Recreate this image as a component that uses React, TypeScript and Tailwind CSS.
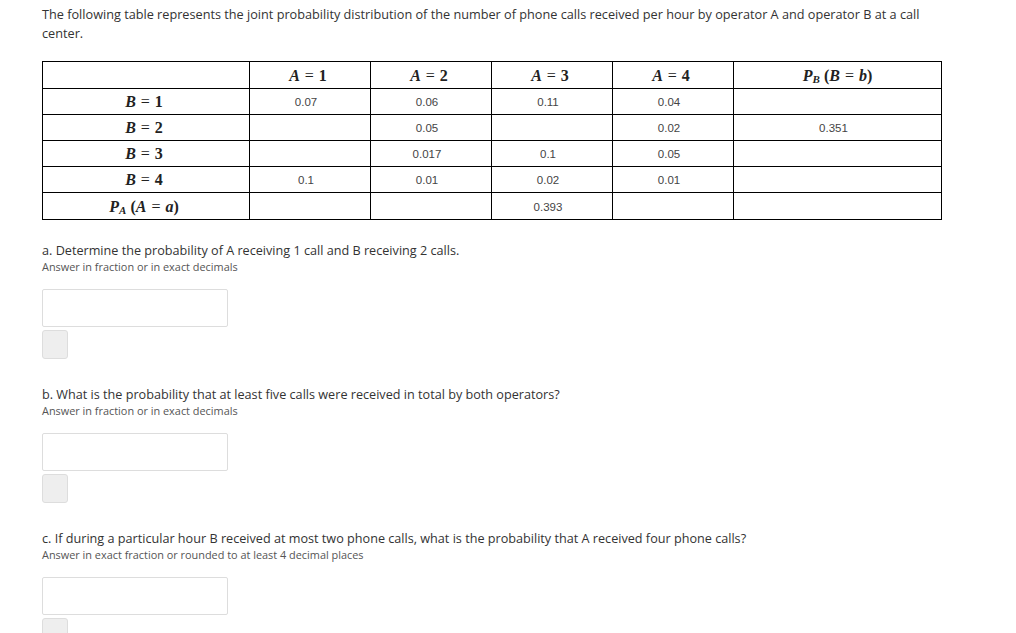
import React from "react";

const Var = ({ c }: { c: string }) => <span className="italic">{c}</span>;

const Eq = ({ v, n }: { v: string; n: string }) => (
  <span className="font-['Liberation_Serif',serif] text-[16px] font-bold text-[#222]">
    <Var c={v} />
    <span className="mx-[5px] font-normal">=</span>
    <span>{n}</span>
  </span>
);

const PMarg = ({ sub, v, l }: { sub: string; v: string; l: string }) => (
  <span className="font-['Liberation_Serif',serif] text-[16px] font-bold text-[#222]">
    <span className="italic">P</span>
    <sub className="italic text-[11px] font-bold">{sub}</sub>
    <span className="ml-[4px]">(</span>
    <span className="italic">{v}</span>
    <span className="mx-[5px] font-normal">=</span>
    <span className="italic">{l}</span>
    <span>)</span>
  </span>
);

const rows: { label: React.ReactNode; cells: string[] }[] = [
  { label: <Eq v="B" n="1" />, cells: ["0.07", "0.06", "0.11", "0.04", ""] },
  { label: <Eq v="B" n="2" />, cells: ["", "0.05", "", "0.02", "0.351"] },
  { label: <Eq v="B" n="3" />, cells: ["", "0.017", "0.1", "0.05", ""] },
  { label: <Eq v="B" n="4" />, cells: ["0.1", "0.01", "0.02", "0.01", ""] },
  { label: <PMarg sub="A" v="A" l="a" />, cells: ["", "", "0.393", "", ""] },
];

const Question = ({ q, hint }: { q: string; hint: string }) => (
  <div className="flex flex-col">
    <p className="text-[12.65px] leading-[18px] text-[#333]">{q}</p>
    <p className="text-[10.9px] leading-[16px] text-[#555]">{hint}</p>
    <div className="mt-[14px] h-[38px] w-[186px] rounded-[2px] border border-[#ddd] bg-white" />
    <div className="mt-[3px] h-[29px] w-[26px] rounded-[3px] border border-[#ddd] bg-[#eee]" />
  </div>
);

export default function App() {
  return (
    <div className="min-h-[633px] w-[1016px] bg-white px-[42px] pt-[5px] font-['Open_Sans',sans-serif] text-[#333]">
      <p className="w-[900px] text-[12.7px] leading-[19px]">
        The following table represents the joint probability distribution of the number of phone calls received per hour by operator A and operator B at a call center.
      </p>
      <table className="mt-[18px] w-[900px] border-collapse">
        <thead>
          <tr className="h-[27px]">
            <th className="w-[207px] border border-black p-0 leading-[18px]"></th>
            {["1", "2", "3", "4"].map((n) => (
              <th key={n} className="w-[121px] border border-black p-0 pr-[4px] font-normal leading-[18px]">
                <Eq v="A" n={n} />
              </th>
            ))}
            <th className="border border-black p-0 font-normal leading-[18px]">
              <PMarg sub="B" v="B" l="b" />
            </th>
          </tr>
        </thead>
        <tbody>
          {rows.map((r, i) => (
            <tr key={i} className={i === 4 ? "h-[27px]" : "h-[26px]"}>
              <td className="border border-black p-0 pr-[4px] text-center leading-[18px]">{r.label}</td>
              {r.cells.map((c, j) => (
                <td
                  key={j}
                  className="border border-black p-0 pr-[8px] pt-[1px] text-center font-['Liberation_Sans',sans-serif] text-[11.5px] leading-[16px] text-[#444]"
                >
                  {c}
                </td>
              ))}
            </tr>
          ))}
        </tbody>
      </table>
      <div className="mt-[21px] flex flex-col gap-[26px]">
        <Question
          q="a. Determine the probability of A receiving 1 call and B receiving 2 calls."
          hint="Answer in fraction or in exact decimals"
        />
        <Question
          q="b. What is the probability that at least five calls were received in total by both operators?"
          hint="Answer in fraction or in exact decimals"
        />
        <Question
          q="c. If during a particular hour B received at most two phone calls, what is the probability that A received four phone calls?"
          hint="Answer in exact fraction or rounded to at least 4 decimal places"
        />
      </div>
    </div>
  );
}
